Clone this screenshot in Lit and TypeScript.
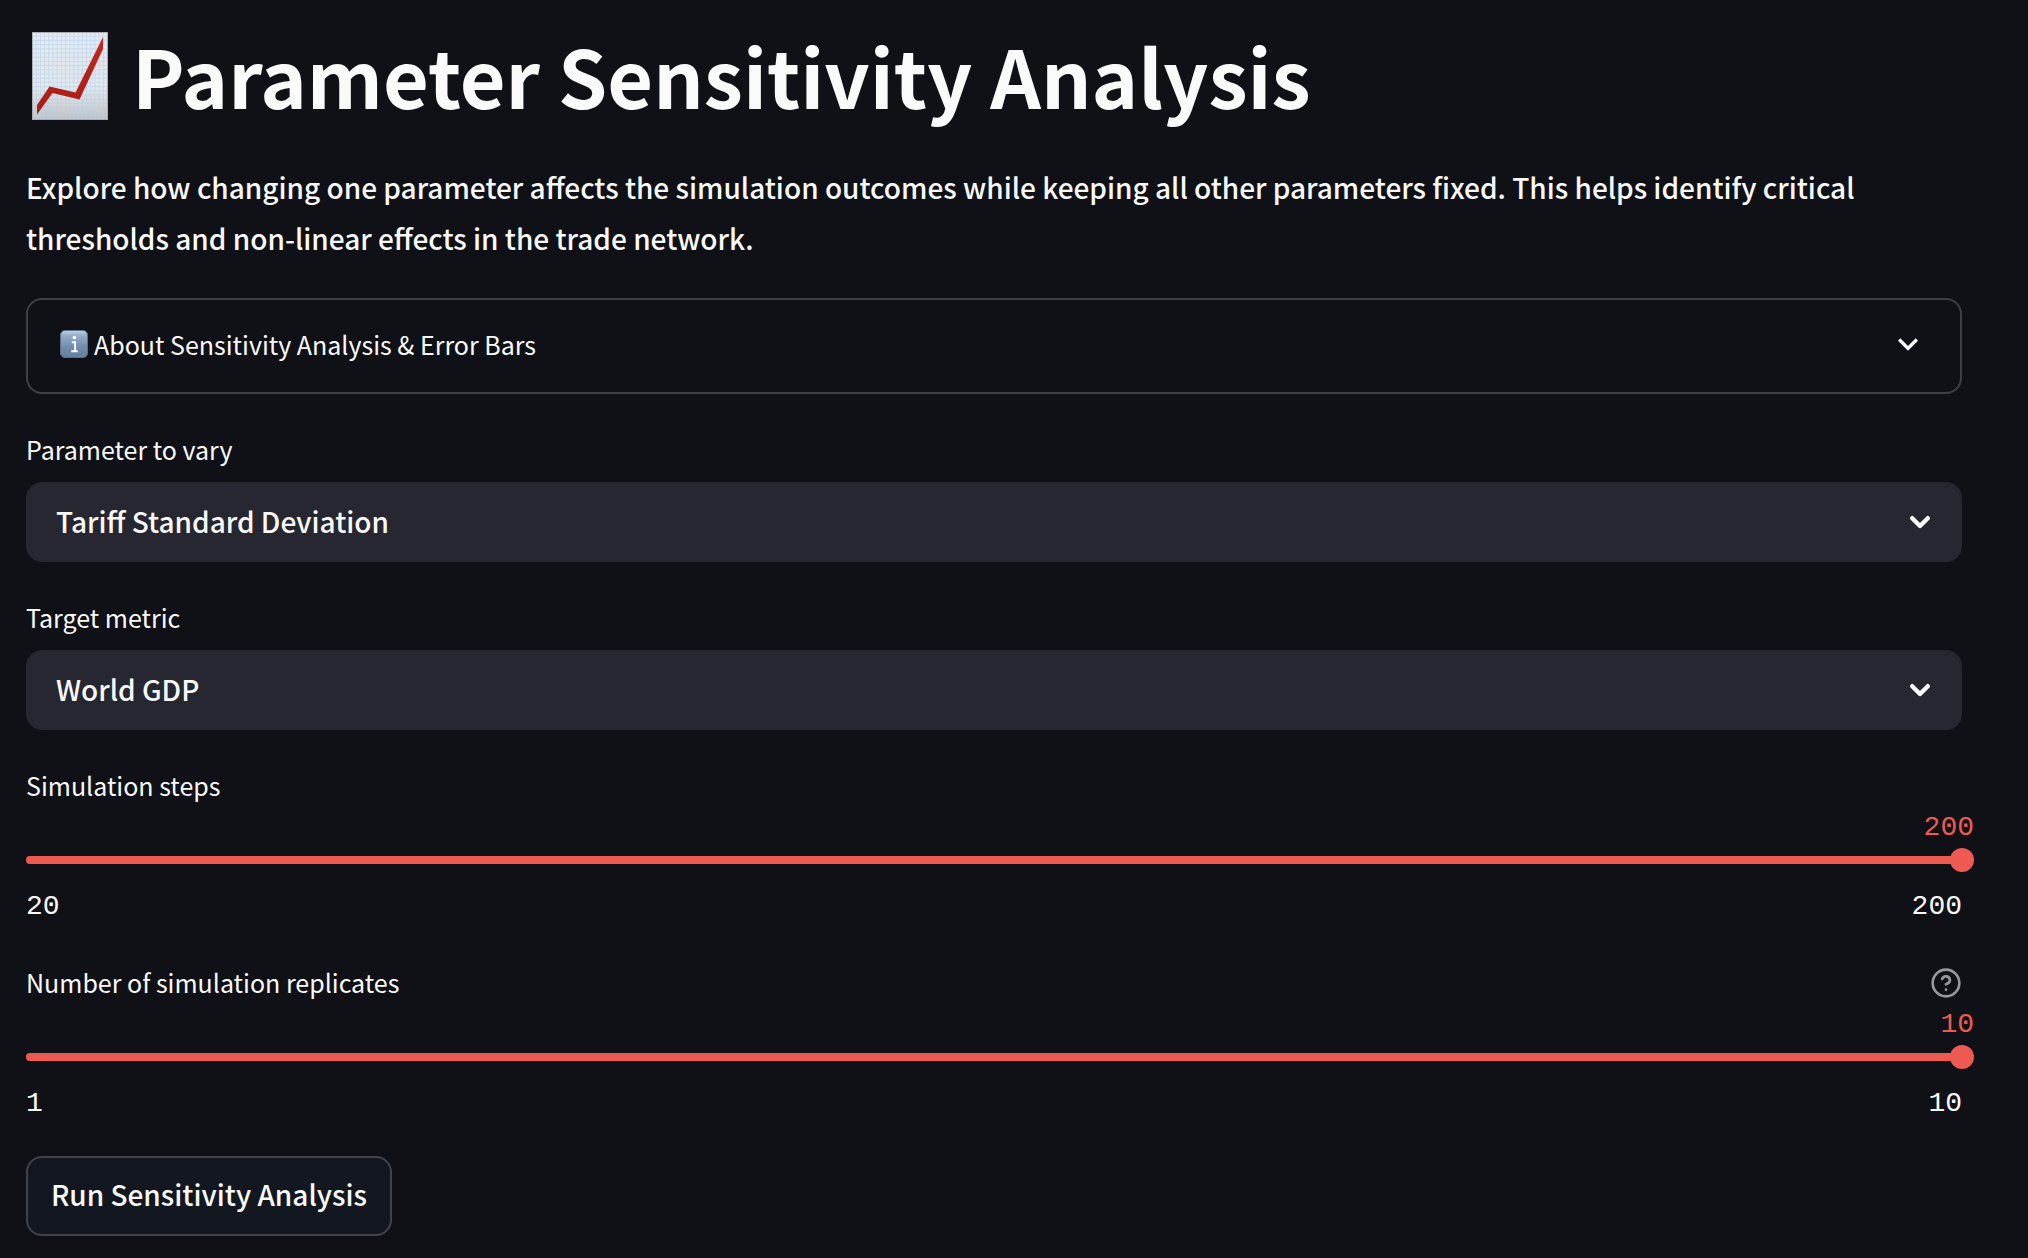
import { LitElement, html, css, svg } from "lit";
import { customElement, property, state } from "lit/decorators.js";

const gridLines = Array.from({ length: 20 }, (_, i) => i + 1);

const base = css`
  :host {
    display: block;
    box-sizing: border-box;
    font-family: "Noto Sans CJK SC", "Noto Sans", sans-serif;
    color: #fafafa;
  }
  *,
  *::before,
  *::after {
    box-sizing: border-box;
  }
  .label-row {
    display: flex;
    align-items: center;
    justify-content: space-between;
    height: 48px;
    font-size: 25px;
    line-height: 40px;
  }
  .label-row label {
    padding-bottom: 2px;
  }
`;

@customElement("select-field")
export class SelectField extends LitElement {
  @property() label = "";
  @property({ attribute: false }) options: string[] = [];

  static styles = [
    base,
    css`
      .label-row {
        margin-bottom: 8px;
      }
      .control {
        display: grid;
        grid-template-columns: 1fr 40px 22px;
        align-items: center;
        height: 80px;
        border-radius: 16px;
        background: #262730;
      }
      select {
        grid-area: 1 / 1 / 2 / 4;
        width: 100%;
        height: 80px;
        padding: 0 64px 2px 30px;
        border: 0;
        border-radius: 16px;
        appearance: none;
        background: transparent;
        color: inherit;
        font-family: inherit;
        font-size: 28px;
        font-weight: 500;
        cursor: pointer;
      }
      option {
        background: #262730;
      }
      svg {
        grid-area: 1 / 2 / 2 / 3;
        pointer-events: none;
      }
    `,
  ];

  render() {
    return html`
      <div class="label-row"><label for="field">${this.label}</label></div>
      <div class="control">
        <select id="field">
          ${this.options.map((o) => html`<option>${o}</option>`)}
        </select>
        <svg width="40" height="40" viewBox="0 0 40 40" fill="none" stroke="#fafafa" stroke-width="4.4" stroke-linecap="round" stroke-linejoin="round" aria-hidden="true">
          <path d="M12.2 16.2 20 24l7.8-7.8" />
        </svg>
      </div>
    `;
  }
}

@customElement("slider-field")
export class SliderField extends LitElement {
  @property() label = "";
  @property({ type: Number }) min = 0;
  @property({ type: Number }) max = 100;
  @property({ type: Number }) value = 0;
  @property({ type: Boolean }) help = false;

  static styles = [
    base,
    css`
      :host {
        padding-bottom: 2px;
      }
      .help {
        display: flex;
        padding: 0;
        border: 0;
        background: none;
        color: #97989b;
        cursor: help;
      }
      .value,
      .range {
        font-family: "Liberation Mono", monospace;
        font-size: 28px;
        line-height: 36px;
      }
      .value {
        margin: 0 -12px 2px 0;
        text-align: right;
        color: #ee5a52;
      }
      .slider {
        display: grid;
        align-items: center;
        height: 24px;
      }
      .track,
      .slider input {
        grid-area: 1 / 1;
      }
      .track {
        height: 8px;
        border-radius: 4px;
        background: #40424a;
      }
      .fill {
        height: 8px;
        border-radius: 4px;
        background: #ee5a52;
      }
      .slider input {
        width: calc(100% + 24px);
        height: 24px;
        margin: 0 -12px;
        appearance: none;
        background: transparent;
        cursor: pointer;
      }
      .slider input::-webkit-slider-thumb {
        appearance: none;
        width: 24px;
        height: 24px;
        border-radius: 50%;
        background: #ee5a52;
      }
      .range {
        display: flex;
        justify-content: space-between;
        margin-top: 17px;
      }
    `,
  ];

  private onInput(e: Event) {
    this.value = Number((e.target as HTMLInputElement).value);
  }

  render() {
    const percent = ((this.value - this.min) / (this.max - this.min)) * 100;
    return html`
      <div class="label-row">
        <label for="field">${this.label}</label>
        ${this.help
          ? html`<button class="help" type="button" aria-label="Help">
              <svg width="32" height="32" viewBox="0 0 24 24" fill="none" stroke="currentColor" stroke-width="2" stroke-linecap="round" stroke-linejoin="round">
                <circle cx="12" cy="12" r="10" />
                <path d="M9.09 9a3 3 0 0 1 5.83 1c0 2-3 3-3 3M12 17h.01" />
              </svg>
            </button>`
          : null}
      </div>
      <div class="value" style="padding-right:${100 - percent}%">${this.value}</div>
      <div class="slider">
        <div class="track"><div class="fill" style="width:${percent}%"></div></div>
        <input id="field" type="range" .min=${String(this.min)} .max=${String(this.max)} .value=${String(this.value)} @input=${this.onInput} />
      </div>
      <div class="range"><span>${this.min}</span><span>${this.max}</span></div>
    `;
  }
}

@customElement("app-root")
export class AppRoot extends LitElement {
  @state() private parameters = ["Tariff Standard Deviation"];
  @state() private metrics = ["World GDP"];

  static styles = [
    base,
    css`
      :host {
        min-height: 100vh;
        background: #0f1116;
      }
      main {
        display: flex;
        flex-direction: column;
        gap: 32px;
        padding: 22px 66px 22px 26px;
      }
      h1 {
        display: flex;
        align-items: center;
        gap: 24px;
        margin: 0;
        padding-left: 6px;
        font-size: 79px;
        font-weight: 700;
        line-height: 106px;
      }
      h1 svg {
        flex: none;
      }
      p {
        margin: 0;
        padding: 2px 64px 2px 0;
        font-size: 28px;
        font-weight: 500;
        line-height: 51px;
      }
      details {
        border: 2px solid #3e4044;
        border-radius: 16px;
      }
      summary {
        display: flex;
        align-items: center;
        height: 92px;
        padding: 0 32px 4px;
        font-size: 25px;
        line-height: 40px;
        list-style: none;
        cursor: pointer;
      }
      .title {
        flex: 1;
        padding-left: 6px;
      }
      .run {
        align-self: flex-start;
        height: 80px;
        padding: 0 23px 4px;
        border: 2px solid #40434a;
        border-radius: 16px;
        background: #131720;
        color: inherit;
        font-family: inherit;
        font-size: 28px;
        font-weight: 500;
        cursor: pointer;
      }
    `,
  ];

  private chartIcon() {
    return html`<svg width="76" height="90" viewBox="0 -2 76 90" aria-hidden="true">
      <defs>
        <linearGradient id="paper" x1="0" y1="0" x2="0" y2="1">
          <stop offset="0" stop-color="#e6eaf0" />
          <stop offset="0.65" stop-color="#e4e6ea" />
          <stop offset="1" stop-color="#bfc1c4" />
        </linearGradient>
        <linearGradient id="line" x1="0" y1="0" x2="0" y2="1">
          <stop offset="0" stop-color="#c02a20" />
          <stop offset="1" stop-color="#a81c14" />
        </linearGradient>
      </defs>
      <rect x="0.5" y="0.5" width="75" height="87" fill="url(#paper)" />
      <g stroke="#b3d3ee" stroke-width="1" opacity="0.6">
        ${gridLines.map((i) => svg`<path d=${`M1 ${i * 4.2}H75`} />`)}
        ${gridLines.slice(0, 17).map((i) => svg`<path d=${`M${i * 4.2} 1V87`} />`)}
      </g>
      <rect x="0.5" y="0.5" width="75" height="87" fill="none" stroke="#a9adb1" />
      <path d="M5 73 17.5 54.5 43.5 60.5 71 5V17L47.5 67.5 20.5 61 5 82.5Z" fill="url(#line)" />
    </svg>`;
  }

  private infoIcon() {
    return html`<svg width="28" height="28" viewBox="0 0 28 28" aria-hidden="true">
      <defs>
        <linearGradient id="tile" x1="0" y1="0" x2="0" y2="1">
          <stop offset="0" stop-color="#c0d2e4" />
          <stop offset="0.2" stop-color="#93abc6" />
          <stop offset="0.6" stop-color="#728eae" />
          <stop offset="1" stop-color="#64809c" />
        </linearGradient>
      </defs>
      <rect x="0.5" y="0.5" width="27" height="27" rx="4.5" fill="url(#tile)" stroke="#58718b" />
      <circle cx="14.4" cy="7.6" r="1.8" fill="#fff" />
      <path d="M11.8 12.2h3.3v9M11.2 21.3h6.6" fill="none" stroke="#fff" stroke-width="1.9" />
    </svg>`;
  }

  render() {
    return html`
      <main>
        <h1>${this.chartIcon()}<span>Parameter Sensitivity Analysis</span></h1>
        <p>
          Explore how changing one parameter affects the simulation outcomes while keeping all other parameters fixed.
          This helps identify critical thresholds and non-linear effects in the trade network.
        </p>
        <details>
          <summary>
            ${this.infoIcon()}
            <span class="title">About Sensitivity Analysis &amp; Error Bars</span>
            <svg width="40" height="40" viewBox="0 0 24 24" fill="#fafafa" aria-hidden="true">
              <path d="M7.41 8.59 12 13.17l4.59-4.58L18 10l-6 6-6-6z" />
            </svg>
          </summary>
        </details>
        <select-field label="Parameter to vary" .options=${this.parameters}></select-field>
        <select-field label="Target metric" .options=${this.metrics}></select-field>
        <slider-field label="Simulation steps" min="20" max="200" value="200"></slider-field>
        <slider-field label="Number of simulation replicates" min="1" max="10" value="10" help></slider-field>
        <button class="run" type="button">Run Sensitivity Analysis</button>
      </main>
    `;
  }
}
